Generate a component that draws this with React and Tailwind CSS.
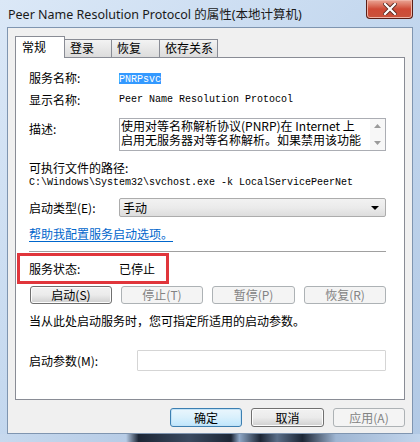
import React from 'react';

const cjk = "font-['Noto_Sans_CJK_SC',sans-serif] text-[12px] leading-[14px]";
const mono = "font-['Liberation_Mono','Noto_Sans_CJK_SC',monospace] text-[10px] leading-[14px]";

const WinButton = ({ children, disabled, isDefault, className = '' }) => {
  const base = 'h-full flex items-center justify-center rounded-[3px] border ' + cjk;
  if (disabled) {
    return (
      <div className={`${base} border-[#adb2b5] bg-[#f4f4f4] text-[#838383] ${className}`}>{children}</div>
    );
  }
  if (isDefault) {
    return (
      <div className={`${base} border-[#3c7fb1] bg-gradient-to-b from-[#eaf6fd] via-[#d9f0fc] to-[#bee6fd] text-black shadow-[inset_0_0_0_1px_#c2e2f6] ${className}`}>{children}</div>
    );
  }
  return (
    <div className={`${base} border-[#707070] bg-gradient-to-b from-[#f2f2f2] via-[#ebebeb] to-[#cfcfcf] text-black shadow-[inset_0_0_0_1px_#fcfcfc] ${className}`}>{children}</div>
  );
};

export default function App() {
  return (
    <div className="w-[420px] h-[442px] overflow-hidden flex flex-col bg-gradient-to-br from-[#dbe8f7] via-[#c3d7ee] to-[#b2c9e5] text-black">
      {/* title bar */}
      <div className="h-[27px] flex items-start pl-[8px] pr-[7px]">
        <span className="mt-[7px] font-['Noto_Sans','Noto_Sans_CJK_SC',sans-serif] text-[12.5px] leading-[16px] text-[#1a1a1a]">
          Peer Name Resolution Protocol 的属性(本地计算机)
        </span>
        <div className="ml-auto w-[47px] h-[19px] rounded-b-[4px] border border-t-0 border-[#5a1e16] bg-gradient-to-b from-[#e9a595] via-[#cf4a36] to-[#c8523c] flex items-center justify-center shadow-[inset_0_0_0_1px_#f0b3a5]">
          <svg width="14" height="12" viewBox="0 0 14 12">
            <path d="M2 1 L12 11 M12 1 L2 11" stroke="#5a2a22" strokeWidth="4" strokeLinecap="square" />
            <path d="M2 1 L12 11 M12 1 L2 11" stroke="#ffffff" strokeWidth="2.2" strokeLinecap="square" />
          </svg>
        </div>
      </div>

      {/* client area */}
      <div className="mx-[7px] h-[407px] border border-[#7f95b0] bg-[#f0f0f0] flex flex-col pl-[7px] pr-[7px] pt-[8px]">
        {/* tabs */}
        <div className="h-[21px] flex items-end relative z-10">
          <div className={`w-[50px] h-[22px] mb-[-1px] bg-white border border-b-0 border-[#898c95] pl-[6px] pt-[3px] ${cjk}`}>常规</div>
          <div className={`w-[47px] h-[18px] border border-b-0 border-l-0 border-[#898c95] bg-gradient-to-b from-[#f3f3f3] to-[#dcdcdc] pl-[5px] pt-[1px] ${cjk}`}>登录</div>
          <div className={`w-[48px] h-[18px] border border-b-0 border-l-0 border-[#898c95] bg-gradient-to-b from-[#f3f3f3] to-[#dcdcdc] pl-[5px] pt-[1px] ${cjk}`}>恢复</div>
          <div className={`w-[58px] h-[18px] border border-b-0 border-l-0 border-[#898c95] bg-gradient-to-b from-[#f3f3f3] to-[#dcdcdc] pl-[5px] pt-[1px] ${cjk}`}>依存关系</div>
        </div>

        {/* panel */}
        <div className={`relative h-[343px] bg-white border border-[#898c95] flex flex-col pl-[13px] pr-[18px] ${cjk}`}>
          <div className="mt-[12px] h-[16px] flex items-center">
            <span className="w-[90px]">服务名称:</span>
            <span className={`${mono} bg-[#3399ff] text-white h-[11px] leading-[11px] w-[42px]`}>PNRPsvc</span>
          </div>
          <div className="mt-[6px] h-[16px] flex items-center">
            <span className="w-[90px]">显示名称:</span>
            <span className={mono}>Peer Name Resolution Protocol</span>
          </div>
          <div className="mt-[10px] h-[33px] flex items-start">
            <span className="w-[90px] mt-[4px]">描述:</span>
            <div className="flex-1 h-full border border-[#abadb3] flex">
              <div className="flex-1 pl-[1px] text-[12px] leading-[14px] whitespace-nowrap">
                <div>使用对等名称解析协议(PNRP)在 Internet 上</div>
                <div>启用无服务器对等名称解析。如果禁用该功能</div>
              </div>
              <div className="w-[15px] h-full bg-[#f7f7f7] flex flex-col items-center justify-between py-[5px]">
                <svg width="7" height="4" viewBox="0 0 7 4"><path d="M0 4 L3.5 0 L7 4 Z" fill="#9a9a9a" /></svg>
                <svg width="7" height="4" viewBox="0 0 7 4"><path d="M0 0 L3.5 4 L7 0 Z" fill="#9a9a9a" /></svg>
              </div>
            </div>
          </div>
          <div className="mt-[10px] h-[14px]">可执行文件的路径:</div>
          <div className={`mt-[1px] h-[14px] ${mono}`}>C:\Windows\System32\svchost.exe -k LocalServicePeerNet</div>
          <div className="mt-[8px] h-[19px] flex items-center">
            <span className="w-[90px]">启动类型(E):</span>
            <div className="flex-1 h-full rounded-[2px] border border-[#acacac] bg-gradient-to-b from-[#f2f2f2] via-[#ebebeb] to-[#dddddd] flex items-center pl-[3px] pr-[6px]">
              <span>手动</span>
              <svg className="ml-auto" width="8" height="4" viewBox="0 0 8 4"><path d="M0 0 L4 4 L8 0 Z" fill="#000" /></svg>
            </div>
          </div>
          <div className="mt-[10px] h-[14px]">
            <span className="text-[#0066cc] underline underline-offset-2">帮助我配置服务启动选项。</span>
          </div>
          <div className="mt-[10px] h-[2px] border-t border-[#a0a0a0] border-b border-b-white" />
          <div className="mt-[9px] h-[14px] flex items-center">
            <span className="w-[90px]">服务状态:</span>
            <span>已停止</span>
          </div>
          <div className="mt-[10px] h-[18px] flex justify-between pl-[1px]">
            <WinButton className="w-[82px]">启动(S)</WinButton>
            <WinButton disabled className="w-[82px]">停止(T)</WinButton>
            <WinButton disabled className="w-[83px]">暂停(P)</WinButton>
            <WinButton disabled className="w-[82px]">恢复(R)</WinButton>
          </div>
          <div className="mt-[10px] h-[14px]">当从此处启动服务时，您可指定所适用的启动参数。</div>
          <div className="mt-[22px] h-[21px] flex items-center">
            <span className="w-[108px]">启动参数(M):</span>
            <div className="flex-1 h-full border border-[#d5d5d5] bg-white rounded-[1px]" />
          </div>

          {/* red highlight annotation */}
          <div className="absolute left-[1px] top-[195px] w-[152px] h-[31px] border-[3px] border-[#e0353b]" />
        </div>

        {/* bottom buttons */}
        <div className="mt-[8px] h-[19px] flex justify-end gap-[9px]">
          <WinButton isDefault className="w-[72px]">确定</WinButton>
          <WinButton className="w-[73px]">取消</WinButton>
          <WinButton disabled className="w-[72px]">应用(A)</WinButton>
        </div>
      </div>

      {/* bottom frame */}
      <div className="flex-1 bg-[linear-gradient(90deg,#c7d9ee_0%,#b7cce6_30%,#1c2635_33%,#3a4a60_45%,#1c2635_55%,#8ea7c6_57%,#1c2635_62%,#5a6e88_66%,#1c2635_72%,#9fb6d3_80%,#c2d5ec_100%)]" />
    </div>
  );
}
